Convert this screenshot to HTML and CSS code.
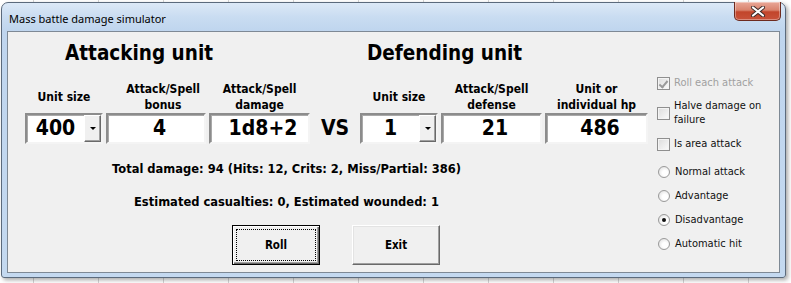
FILE: index.html
```html
<!DOCTYPE html>
<html lang="en">
<head>
    <meta charset="UTF-8">
    <title>Mass battle damage simulator</title>
    <link rel="stylesheet" href="styles.css">
</head>
<body>
    <!-- UserForm window -->
    <div class="window">
        <div class="titlebar">
            <span class="title">Mass battle damage simulator</span>
            <button class="close" title="Close">
                <svg width="16" height="11" viewBox="0 0 16 11">
                    <path d="M3 1.5 L13 9.5 M13 1.5 L3 9.5" stroke="#3a2a28" stroke-width="4" stroke-linecap="round"/>
                    <path d="M3 1.5 L13 9.5 M13 1.5 L3 9.5" stroke="#fff" stroke-width="2.2" stroke-linecap="round"/>
                </svg>
            </button>
        </div>

        <div class="client">
            <div class="main">
                <div class="unit-grid">
                    <h2 class="heading heading-attack">Attacking unit</h2>
                    <h2 class="heading heading-defend">Defending unit</h2>

                    <div class="label">Unit size</div>
                    <div class="label label-bonus">Attack/Spell<br>bonus</div>
                    <div class="label">Attack/Spell<br>damage</div>
                    <div class="label"></div>
                    <div class="label">Unit size</div>
                    <div class="label">Attack/Spell<br>defense</div>
                    <div class="label">Unit or<br>individual hp</div>

                    <div class="combo">
                        <span class="combo-value">400</span>
                        <span class="drop"><span class="arrow"></span></span>
                    </div>
                    <div class="field">4</div>
                    <div class="field">1d8+2</div>
                    <div class="vs">VS</div>
                    <div class="combo">
                        <span class="combo-value">1</span>
                        <span class="drop"><span class="arrow"></span></span>
                    </div>
                    <div class="field">21</div>
                    <div class="field">486</div>
                </div>

                <p class="result result-total">Total damage: 94 (Hits: 12, Crits: 2, Miss/Partial: 386)</p>
                <p class="result result-casualties">Estimated casualties: 0, Estimated wounded: 1</p>

                <div class="buttons">
                    <button class="btn btn-default"><span class="focus">Roll</span></button>
                    <button class="btn">Exit</button>
                </div>
            </div>

            <!-- Options column -->
            <div class="options">
                <label class="opt opt-disabled"><span class="check checked"></span>Roll each attack</label>
                <label class="opt opt-halve"><span class="check"></span>Halve damage on<br>failure</label>
                <label class="opt opt-area"><span class="check"></span>Is area attack</label>
                <label class="opt opt-radio opt-first"><span class="radio"></span>Normal attack</label>
                <label class="opt opt-radio"><span class="radio"></span>Advantage</label>
                <label class="opt opt-radio"><span class="radio selected"></span>Disadvantage</label>
                <label class="opt opt-radio"><span class="radio"></span>Automatic hit</label>
            </div>
        </div>
    </div>
</body>
</html>
```

FILE: styles.css
```css
/* Global */
* {
    margin: 0;
    padding: 0;
    box-sizing: border-box;
}

body {
    width: 791px;
    height: 283px;
    overflow: hidden;
    font-family: "DejaVu Sans", Tahoma, sans-serif;
    font-stretch: condensed;
    color: #000;
    /* spreadsheet behind the form */
    background-color: #fff;
    background-image: repeating-linear-gradient(
        90deg,
        transparent 0,
        transparent 33px,
        #d4d4d4 33px,
        #d4d4d4 34px,
        transparent 34px,
        transparent 65px
    );
}

/* Window frame */
.window {
    width: 785px;
    height: 276px;
    margin: 2px 0 0 1px;
    border: 1px solid #5b6a7c;
    border-radius: 7px 7px 3px 3px;
    padding: 0 5px 4px 5px;
    background: linear-gradient(180deg, #dce9f7 0, #c9dcf1 14px, #bfd5ee 28px, #c4d9f0 100%);
    box-shadow: 2px 2px 4px rgba(0, 0, 0, 0.35);
}

.titlebar {
    height: 28px;
    display: flex;
    justify-content: space-between;
    align-items: flex-start;
    padding-left: 2px;
}

.title {
    font-family: "Noto Sans", sans-serif;
    font-stretch: normal;
    font-size: 11px;
    line-height: 16px;
    margin-top: 8px;
    color: #000;
}

.close {
    width: 47px;
    height: 19px;
    margin: -1px -1px 0 0;
    border: 1px solid #6d2a1e;
    border-top: none;
    border-radius: 0 0 5px 5px;
    background: linear-gradient(180deg, #e9a898 0, #d9836d 45%, #c2452b 55%, #c8523a 100%);
    box-shadow: inset 0 0 0 1px rgba(255, 255, 255, 0.35);
    display: flex;
    justify-content: center;
    align-items: center;
    cursor: pointer;
}

/* Form area */
.client {
    height: 242px;
    border: 1px solid #7e8995;
    background-color: #f0f0f0;
    display: flex;
}

.main {
    flex: 0 0 649px;
    padding-top: 9px;
}

.unit-grid {
    margin-left: 17px;
    display: grid;
    grid-template-columns: 78px 100px 101px 44px 78px 101px 103px;
    column-gap: 3px;
}

.heading {
    font-size: 20.5px;
    line-height: 24px;
    font-weight: bold;
    margin-bottom: 16px;
}

.heading-attack {
    grid-column: 1 / 4;
    padding-left: 40px;
}

.heading-defend {
    grid-column: 5 / 8;
    padding-left: 7px;
}

.label {
    height: 32px;
    display: flex;
    align-items: center;
    justify-content: center;
    text-align: center;
    font-size: 12px;
    line-height: 16px;
    font-weight: bold;
}

.label-bonus {
    padding-left: 14px;
}

/* Text boxes */
.field,
.combo {
    height: 31px;
    background-color: #fff;
    border-style: solid;
    border-width: 2px;
    border-color: #8c8c8c #f4f4f4 #f4f4f4 #8c8c8c;
    box-shadow: inset 1px 1px 0 #a9a9a9;
    font-size: 21px;
    font-weight: bold;
    line-height: 27px;
}

.field {
    text-align: center;
    padding-left: 7px;
}

.combo {
    display: flex;
}

.combo-value {
    flex: 1;
    text-align: center;
}

.drop {
    width: 17px;
    height: 27px;
    background-color: #f0f0f0;
    border-style: solid;
    border-width: 1px;
    border-color: #fff #696969 #696969 #fff;
    box-shadow: inset -1px -1px 0 #a0a0a0;
    display: flex;
    justify-content: center;
    align-items: center;
}

.arrow {
    width: 0;
    height: 0;
    border-left: 3px solid transparent;
    border-right: 3px solid transparent;
    border-top: 3px solid #000;
}

.vs {
    font-size: 21px;
    font-weight: bold;
    line-height: 31px;
    text-align: center;
}

/* Results */
.result {
    margin-left: 17px;
    width: 523px;
    text-align: center;
    font-stretch: normal;
    font-size: 11.5px;
    line-height: 14px;
    font-weight: bold;
}

.result-total {
    margin-top: 18px;
}

.result-casualties {
    margin-top: 19px;
}

/* Buttons */
.buttons {
    display: flex;
    gap: 32px;
    margin: 16px 0 0 224px;
}

.btn {
    width: 88px;
    height: 40px;
    font-family: inherit;
    font-stretch: condensed;
    font-size: 11.5px;
    font-weight: bold;
    background-color: #f0f0f0;
    border-style: solid;
    border-width: 1px;
    border-color: #fff #696969 #696969 #fff;
    box-shadow: inset -1px -1px 0 #a0a0a0, inset 1px 1px 0 #e3e3e3;
    color: #000;
}

.btn-default {
    border: 1px solid #000;
    box-shadow: inset 1px 1px 0 #fff, inset -1px -1px 0 #696969, inset -2px -2px 0 #a0a0a0;
    padding: 3px;
}

.focus {
    display: flex;
    height: 100%;
    justify-content: center;
    align-items: center;
    outline: 1px dotted #000;
    outline-offset: -1px;
}

/* Options column */
.options {
    padding-top: 44px;
    display: flex;
    flex-direction: column;
    font-size: 11px;
    line-height: 14px;
    color: #111;
}

.opt {
    display: flex;
    align-items: center;
    gap: 4px;
}

.opt-disabled {
    color: #a0a0a0;
}

.opt-halve {
    margin-top: 9px;
}

.opt-area {
    margin-top: 10px;
}

.opt-radio {
    margin-top: 10px;
}

.opt-first {
    margin-top: 14px;
}

.check {
    flex: 0 0 13px;
    width: 13px;
    height: 13px;
    border: 1px solid #8f8f8f;
    background: linear-gradient(135deg, #dcdcdc, #fbfbfb);
    box-shadow: inset 0 0 0 1px #f4f4f4;
    position: relative;
}

.check.checked::after {
    content: "";
    position: absolute;
    left: 3px;
    top: 1px;
    width: 3px;
    height: 7px;
    border-right: 2px solid #9a9a9a;
    border-bottom: 2px solid #9a9a9a;
    transform: rotate(40deg);
}

.radio {
    flex: 0 0 12px;
    width: 12px;
    height: 12px;
    border: 1px solid #9a9a9a;
    border-radius: 50%;
    background: radial-gradient(circle at 60% 60%, #fff 30%, #d8d8d8 100%);
    display: flex;
    justify-content: center;
    align-items: center;
    margin: 0 1px 0 1px;
}

.radio.selected::after {
    content: "";
    width: 4px;
    height: 4px;
    border-radius: 50%;
    background-color: #111;
}
```
